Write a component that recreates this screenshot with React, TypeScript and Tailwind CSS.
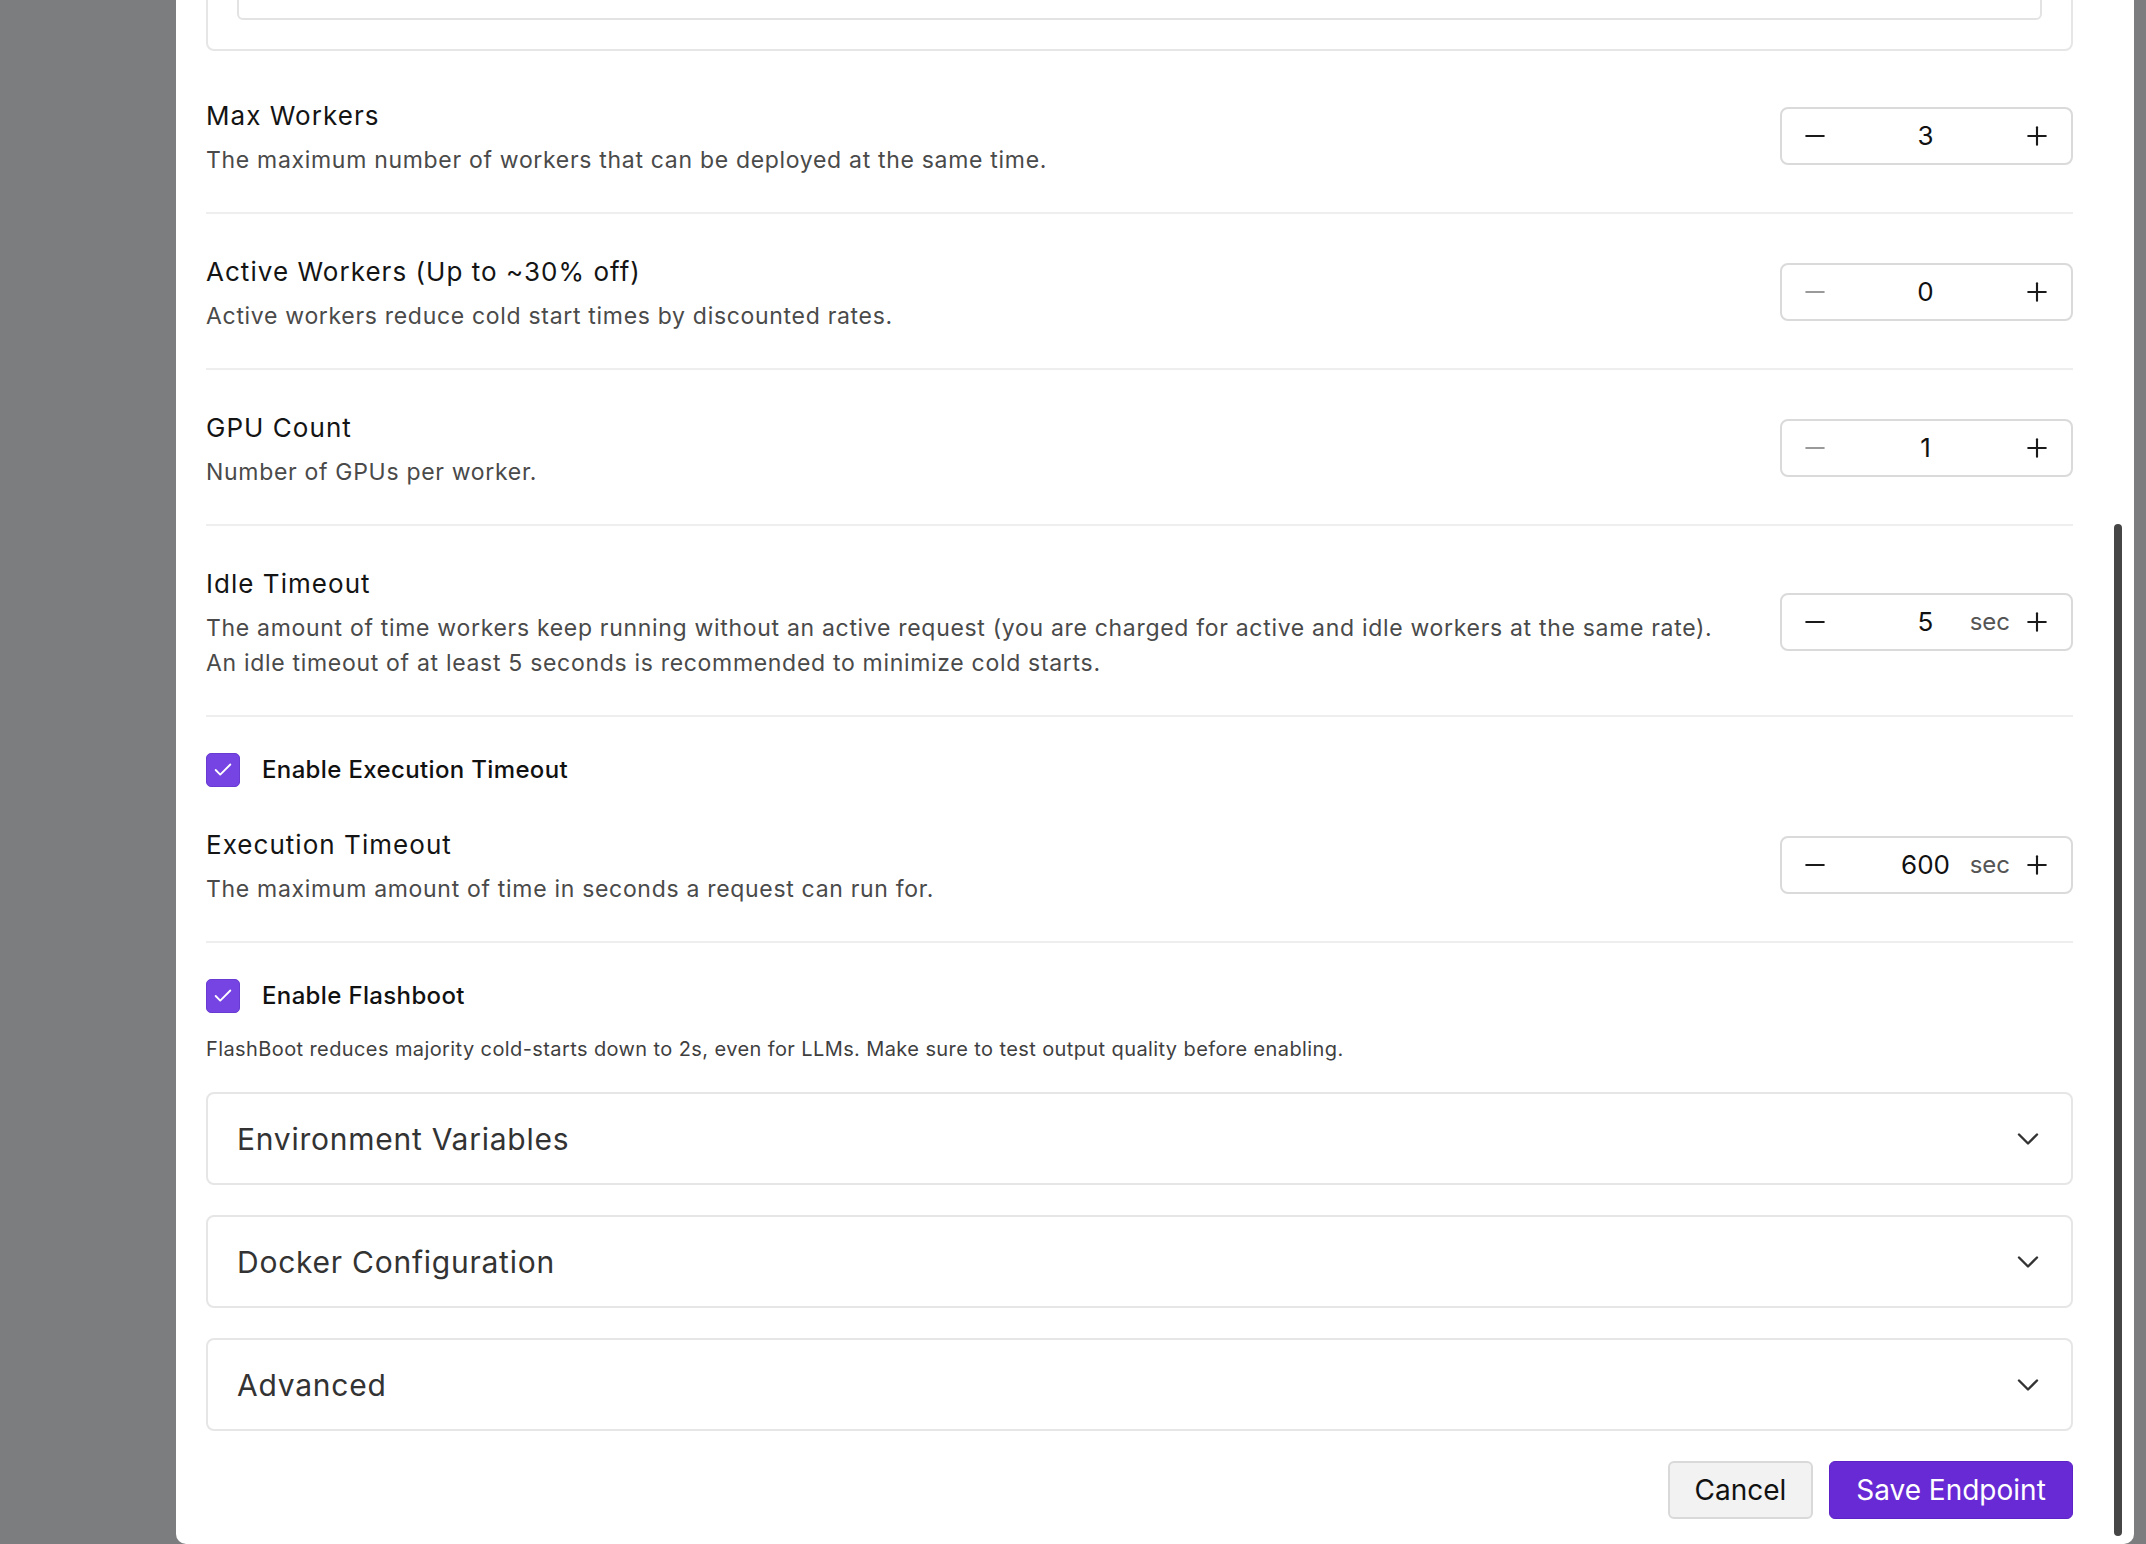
import React from 'react';
import { Minus, Plus, Check, ChevronDown } from 'lucide-react';

interface StepperProps {
  value: number;
  suffix?: string;
  minDisabled?: boolean;
}

const Stepper: React.FC<StepperProps> = ({ value, suffix, minDisabled }) => (
  <div className="relative mb-[4px] flex h-[58px] w-[293px] shrink-0 items-center rounded-[8px] border-2 border-[#dadada] bg-white">
    <div className="flex h-full w-[66px] items-center justify-center">
      <Minus size={30} strokeWidth={1.7} color={minDisabled ? '#9a9a9a' : '#1a1a1a'} />
    </div>
    <div className="flex-1 text-center text-[26px] leading-none text-[#111]">{value}</div>
    {suffix && (
      <span className="absolute right-[61px] top-1/2 -translate-y-1/2 text-[24px] leading-none text-[#555]">
        {suffix}
      </span>
    )}
    <div className="flex h-full w-[68px] items-center justify-center">
      <Plus size={30} strokeWidth={1.7} color="#1a1a1a" />
    </div>
  </div>
);

interface FieldRowProps {
  title: string;
  lines: string[];
  value: number;
  suffix?: string;
  minDisabled?: boolean;
  className?: string;
}

const FieldRow: React.FC<FieldRowProps> = ({ title, lines, value, suffix, minDisabled, className = '' }) => (
  <div className={`flex items-center gap-[20px] border-b-2 border-[#eeeeee] pt-[40px] pb-[34px] ${className}`}>
    <div className="flex-1">
      <div className="text-[26px] leading-[36px] tracking-[0.04em] text-[#141414]">{title}</div>
      <div className="mt-[9px] text-[23px] leading-[35px] tracking-[0.03em] text-[#4a4a4a]">
        {lines.map((l) => (
          <div key={l} className="whitespace-nowrap">{l}</div>
        ))}
      </div>
    </div>
    <Stepper value={value} suffix={suffix} minDisabled={minDisabled} />
  </div>
);

const CheckRow = ({ label, className = '' }: { label: string; className?: string }) => (
  <div className={`flex items-center gap-[22px] ${className}`}>
    <div className="flex h-[34px] w-[34px] items-center justify-center rounded-[5px] border border-[#6a3bd2] bg-[#7544e2]">
      <Check size={22} strokeWidth={2} color="#ffffff" />
    </div>
    <span className="text-[24px] font-medium leading-none tracking-[0.015em] text-[#111]">{label}</span>
  </div>
);

const Accordion = ({ label }: { label: string }) => (
  <div className="flex h-[93px] items-center justify-between rounded-[8px] border-2 border-[#e6e6e6] bg-white pl-[29px] pr-[25px]">
    <span className="text-[30px] leading-none tracking-[0.025em] text-[#333333]">{label}</span>
    <ChevronDown size={36} strokeWidth={1.6} color="#333333" />
  </div>
);

export default function App() {
  return (
    <div className="flex h-[1544px] w-[2146px] overflow-hidden bg-[#7c7d7f] font-['Inter',sans-serif]">
      <div className="ml-[176px] flex h-full w-[1958px] overflow-hidden rounded-b-[10px] bg-white">
        <div className="flex w-[1897px] flex-col pl-[30px]">
          {/* tail of the card above, scrolled mostly out of view */}
          <div className="mt-[-69px] rounded-[8px] border-2 border-[#e6e6e6] px-[29px] py-[29px]">
            <div className="h-[58px] rounded-[6px] border-2 border-[#e3e3e3]" />
          </div>

          <FieldRow
            className="mt-[7px]"
            title="Max Workers"
            lines={['The maximum number of workers that can be deployed at the same time.']}
            value={3}
          />
          <FieldRow
            title="Active Workers (Up to ~30% off)"
            lines={['Active workers reduce cold start times by discounted rates.']}
            value={0}
            minDisabled
          />
          <FieldRow title="GPU Count" lines={['Number of GPUs per worker.']} value={1} minDisabled />
          <FieldRow
            title="Idle Timeout"
            lines={[
              'The amount of time workers keep running without an active request (you are charged for active and idle workers at the same rate).',
              'An idle timeout of at least 5 seconds is recommended to minimize cold starts.',
            ]}
            value={5}
            suffix="sec"
          />

          <CheckRow className="mt-[36px]" label="Enable Execution Timeout" />
          <FieldRow
            title="Execution Timeout"
            lines={['The maximum amount of time in seconds a request can run for.']}
            value={600}
            suffix="sec"
          />

          <CheckRow className="mt-[36px]" label="Enable Flashboot" />
          <p className="mt-[22px] text-[20px] leading-[28px] tracking-[0.02em] text-[#3f3f3f]">
            FlashBoot reduces majority cold-starts down to 2s, even for LLMs. Make sure to test output quality before enabling.
          </p>

          <div className="mt-[29px] flex flex-col gap-[30px]">
            <Accordion label="Environment Variables" />
            <Accordion label="Docker Configuration" />
            <Accordion label="Advanced" />
          </div>

          <div className="mt-[30px] flex justify-end gap-[16px]">
            <button className="h-[58px] w-[145px] rounded-[6px] border-2 border-[#d9d9d9] bg-[#f2f2f2] text-[28px] text-[#111]">
              Cancel
            </button>
            <button className="h-[58px] w-[244px] rounded-[6px] border border-[#5d22c6] bg-[#672ad5] text-[28px] text-white">
              Save Endpoint
            </button>
          </div>
        </div>

        <div className="ml-[41px] w-[8px] pt-[524px]">
          <div className="h-[1012px] w-[8px] rounded-full bg-[#464646]" />
        </div>
      </div>
    </div>
  );
}
